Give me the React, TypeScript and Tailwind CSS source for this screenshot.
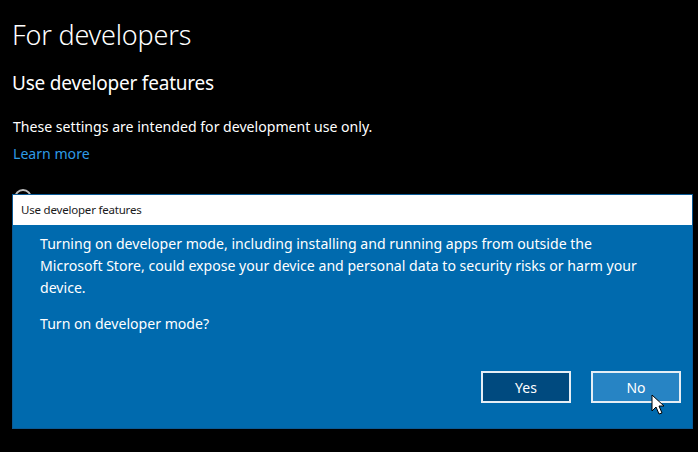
import React from "react";

const font = { fontFamily: '"Noto Sans", "Open Sans", sans-serif' };

function Cursor() {
  return (
    <svg width="16" height="22" viewBox="0 0 16 22" className="absolute left-[651px] top-[394px]">
      <path d="M1 1 L1 17 L5 13 L8 20 L11 19 L8 12 L13 12 Z" fill="#fff" stroke="#000" strokeWidth="1" strokeLinejoin="round" />
    </svg>
  );
}

export default function App() {
  return (
    <div className="relative w-[698px] h-[452px] bg-black overflow-hidden text-white" style={font}>
      {/* Page */}
      <div className="px-[12px] pt-[15px]">
        <h1 className="text-[27px] font-light leading-[40px] tracking-[-0.2px]">For developers</h1>
        <h2 className="mt-[14px] text-[19px] leading-[28px] tracking-[-0.2px]">Use developer features</h2>
        <p className="mt-[20px] text-[14.1px] leading-[20px] pl-[1px]">
          These settings are intended for development use only.
        </p>
        <a className="mt-[7px] block text-[14.1px] leading-[20px] pl-[1px] text-[#2e9be6]">Learn more</a>
      </div>

      {/* Radio peeking out from beneath the dialog */}
      <div className="absolute left-[14px] top-[189px] w-[18px] h-[18px] rounded-full border-2 border-[#bdbdbd]" />

      {/* Dialog */}
      <div className="relative mt-[30px] ml-[12px] w-[681px] h-[235px] flex flex-col border border-[#0a5a96]">
        <div className="h-[30px] bg-white flex items-center px-[8px] text-[11.5px] text-[#1a1a1a] tracking-[-0.2px]">
          Use developer features
        </div>
        <div className="flex-1 bg-[#006aae] pl-[27px] pr-[11px] pt-[8px] flex flex-col">
          <p className="text-[14.1px] leading-[22px] max-w-[600px]">
            Turning on developer mode, including installing and running apps from outside the
            Microsoft Store, could expose your device and personal data to security risks or harm your
            device.
          </p>
          <p className="mt-[14px] text-[14.1px] leading-[22px]">Turn on developer mode?</p>
          <div className="mt-auto mb-[25px] flex justify-end gap-[20px]">
            <button className="w-[90px] h-[32px] bg-[#004a7f] border-2 border-[#e6eef5] text-[14px] text-white">
              Yes
            </button>
            <button className="w-[90px] h-[32px] bg-[#2784c4] border-2 border-[#e6eef5] text-[14px] text-white">
              No
            </button>
          </div>
        </div>
      </div>

      <Cursor />
    </div>
  );
}
